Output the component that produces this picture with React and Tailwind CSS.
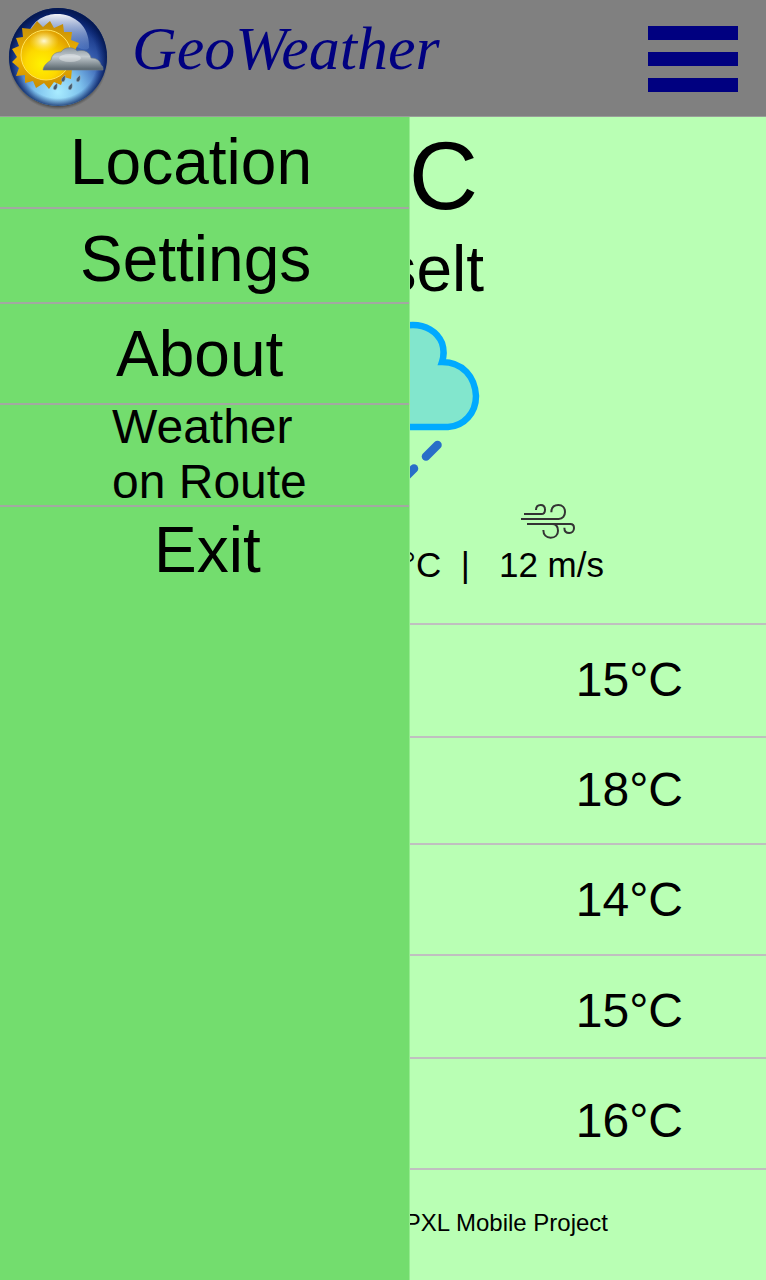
const menuItems = [
  { label: "Location", box: "h-[92px] border-b-2 pl-[70px] text-[64px]" },
  { label: "Settings", box: "h-[95px] border-b-2 pt-[6px] pl-20 text-[64px]" },
  { label: "About", box: "h-[101px] border-b-2 pl-29 text-[64px]" },
  { label: "Weather on Route", box: "h-[102px] border-b-2 pb-[3px] pl-28 pr-20 text-[48px] leading-[55px]" },
  { label: "Exit", box: "h-[86px] pl-[154px] text-[64px]" },
];

const forecast = [
  { day: "Monday", temp: "15°C", box: "h-[113px] pt-[27px]" },
  { day: "Tuesday", temp: "18°C", box: "h-[107px] pt-[24px]" },
  { day: "Wednesday", temp: "14°C", box: "h-[111px] pt-[27px]" },
  { day: "Thursday", temp: "15°C", box: "h-[103px] pt-[27px]" },
  { day: "Friday", temp: "16°C", box: "h-[111px] pt-[34px]" },
];

function Logo() {
  return (
    <svg viewBox="0 2 120 116" className="h-[116px] w-[120px] shrink-0" aria-hidden="true">
      <defs>
        <radialGradient id="sky" cx="58" cy="94" r="78" gradientUnits="userSpaceOnUse">
          <stop offset="0" stopColor="#a9ecff" />
          <stop offset="0.3" stopColor="#7cc0ec" />
          <stop offset="0.6" stopColor="#3a62b4" />
          <stop offset="1" stopColor="#06206e" />
        </radialGradient>
        <radialGradient id="rim" cx="58" cy="61" r="49" gradientUnits="userSpaceOnUse">
          <stop offset="0.8" stopColor="#06206e" stopOpacity="0" />
          <stop offset="1" stopColor="#041850" stopOpacity="0.9" />
        </radialGradient>
        <linearGradient id="gloss" x1="0" y1="0" x2="0" y2="1">
          <stop offset="0" stopColor="#fff" stopOpacity="0.95" />
          <stop offset="1" stopColor="#8fb4ec" stopOpacity="0.2" />
        </linearGradient>
        <radialGradient id="shine">
          <stop offset="0" stopColor="#fffbe0" stopOpacity="0.95" />
          <stop offset="1" stopColor="#ffe860" stopOpacity="0" />
        </radialGradient>
        <radialGradient id="sun" cx="42" cy="66" r="32" gradientUnits="userSpaceOnUse">
          <stop offset="0" stopColor="#fff200" />
          <stop offset="0.5" stopColor="#fdd800" />
          <stop offset="1" stopColor="#e2a200" />
        </radialGradient>
        <linearGradient id="rays" x1="0" y1="0" x2="0" y2="1">
          <stop offset="0" stopColor="#c08a08" />
          <stop offset="0.5" stopColor="#f0b400" />
          <stop offset="1" stopColor="#c98c00" />
        </linearGradient>
        <linearGradient id="cloudlet" x1="0" y1="0" x2="0" y2="1">
          <stop offset="0" stopColor="#8c979e" />
          <stop offset="0.4" stopColor="#c2cacf" />
          <stop offset="1" stopColor="#56636a" />
        </linearGradient>
        <radialGradient id="shade" cx="58" cy="62" r="50" gradientUnits="userSpaceOnUse">
          <stop offset="0.9" stopColor="#222" stopOpacity="0.8" />
          <stop offset="1" stopColor="#444" stopOpacity="0" />
        </radialGradient>
      </defs>
      <circle cx="58" cy="62" r="50" fill="url(#shade)" />
      <circle cx="58" cy="59" r="49" fill="url(#sky)" />
      <circle cx="58" cy="59" r="49" fill="url(#rim)" />
      <path d="M27 38C33 20 48 15 60 16C79 18 90 32 89 50C84 55 75 47 66 44C53 40 38 48 27 38Z" fill="url(#gloss)" />
      <path
        d="M50 23L54 30L63 26L64 34L72 34L71 42L79 45L75 52L80 56L76 62L79 68L72 71L71 81L64 79L61 87L54 84L49 91L44 85L36 90L33 83L25 85L25 77L16 78L19 70L12 64L17 59L12 51L19 48L16 40L23 39L22 30L31 31L37 23L43 29Z"
        fill="url(#rays)"
      />
      <circle cx="46" cy="57" r="25" fill="url(#sun)" stroke="#ffe45a" strokeWidth="1" />
      <ellipse cx="44" cy="43" rx="15" ry="11" fill="url(#shine)" />
      <path
        d="M43 72C44 66 49 64 51 62C52 56 56 54 61 54C64 49 73 48 77 53C84 51 90 54 91 60C97 60 100 63 101 67C103 68 103 70 103 72Z"
        fill="url(#cloudlet)"
        stroke="#727e85"
        strokeWidth="0.6"
      />
      <ellipse cx="70" cy="60" rx="11" ry="4" fill="#fff" opacity="0.35" />
      <g fill="#44596b" stroke="#9fb4c2" strokeWidth="0.5">
        <path d="M65 77Q66 83 63 84Q60 83 62 80Z" />
        <path d="M80 77Q81 83 78 84Q75 83 77 80Z" />
        <path d="M57 85Q58 91 55 92Q52 91 54 88Z" />
        <path d="M72 85Q73 91 70 92Q67 91 69 88Z" />
      </g>
    </svg>
  );
}

function RainCloud() {
  return (
    <svg viewBox="290 316 200 180" className="h-[180px] w-[200px]" role="img" aria-label="Rain">
      <path
        d="M330 427H449C465 426 477 413 477 396C476 377 464 362 443 362C445 356 445 349 443 343C438 331 426 325 414 325C400 325 388 332 382 344C374 338 362 342 360 352C359 356 359 360 360 363C344 358 330 363 322 372C306 390 312 421 330 427Z"
        fill="#82e6cd"
        stroke="#00aaff"
        strokeWidth="6.500"
      />
      <g stroke="#286ec8" strokeWidth="8.500" strokeLinecap="round">
        <path d="M438.500 445L427 456.500" />
        <path d="M415 468.500L403 480.500" />
        <path d="M392 445L380 457" />
        <path d="M346 445L334 457" />
      </g>
    </svg>
  );
}

function Wind() {
  return (
    <svg
      viewBox="57 33 180 120"
      className="h-10 w-15"
      fill="none"
      stroke="#333"
      strokeWidth="6"
      role="img"
      aria-label="Wind"
    >
      <path d="M72 72H124C132 72 135 66 135 59C135 50 130 45 122 45C114 45 108 50 108 60" />
      <path d="M63 87H176C188 87 195 77 195 66C195 53 187 45 175 45C162 45 154 53 154 67" />
      <path d="M81 102H211C219 102 222 108 222 114C222 123 216 129 208 129C199 129 193 123 193 113" />
      <path d="M156 102C169 102 174 111 174 122C174 135 165 143 152 143C139 143 130 134 130 120" />
    </svg>
  );
}

export default function App() {
  return (
    <div className="flex min-h-screen flex-col bg-[#b9ffb4] font-['Liberation_Sans',Arial,sans-serif] text-black">
      <header className="flex h-[117px] items-center border-b border-[#999d99] bg-[#808080] pr-7">
        <Logo />
        <h1 className="ml-3 pb-5 font-['Liberation_Serif',serif] text-[62px] leading-[80px] text-[#000080] italic">
          GeoWeather
        </h1>
        <button type="button" aria-label="Menu" className="ml-auto flex w-[90px] flex-col gap-3 pt-0.5">
          <span className="h-[14px] bg-[#000080]" />
          <span className="h-[14px] bg-[#000080]" />
          <span className="h-[14px] bg-[#000080]" />
        </button>
      </header>

      <div className="relative flex grow flex-col">
        <nav className="absolute inset-y-0 left-0 w-[410px] border-r border-[#93ec8e] bg-[#73dd6e]">
          <ul>
            {menuItems.map((item) => (
              <li key={item.label}>
                <a href="#" className={`flex items-center border-[#a3a8a1] ${item.box}`}>
                  {item.label}
                </a>
              </li>
            ))}
          </ul>
        </nav>

        <main>
          <section className="flex h-[508px] flex-col items-end border-b-2 border-[#c0bfc0] pt-[11px]">
            <p className="pr-[288px] text-[96px] leading-[96px]">15°C</p>
            <h2 className="mt-[13px] pr-[282px] text-[64px] leading-[64px]">Hasselt</h2>
            <div className="mt-[15px] pr-[277px]">
              <RainCloud />
            </div>
            <div className="mt-[5px] pr-[187px]">
              <Wind />
            </div>
            <p className="mt-1 pr-[162px] text-[35px] leading-[40px] whitespace-pre">{"15°C  |   12 m/s"}</p>
          </section>

          <ul>
            {forecast.map((row) => (
              <li
                key={row.day}
                className={`flex justify-between border-b-2 border-[#c0bfc0] pr-[83px] pl-10 text-[48px] leading-[56px] ${row.box}`}
              >
                <span>{row.day}</span>
                <span>{row.temp}</span>
              </li>
            ))}
          </ul>
        </main>

        <footer className="pt-[37px] pr-[158px] text-right text-[24px] leading-[32px]">PXL Mobile Project</footer>
      </div>
    </div>
  );
}
